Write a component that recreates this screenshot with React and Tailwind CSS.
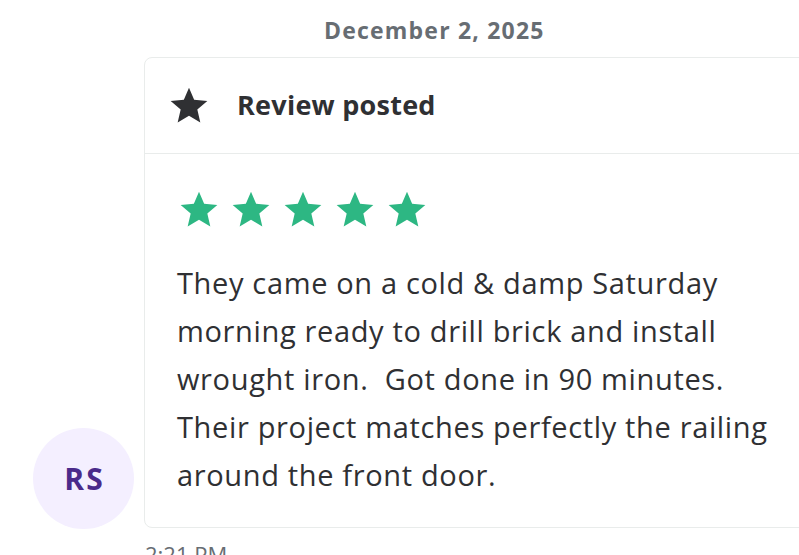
import React from "react";

const StarPath =
  "M12 17.27L18.18 21l-1.64-7.03L22 9.24l-7.19-.61L12 2 9.19 8.63 2 9.24l5.46 4.73L5.82 21z";

function Star({ className }) {
  return (
    <svg viewBox="0 0 24 24" className={className} fill="currentColor">
      <path d={StarPath} />
    </svg>
  );
}

const lines = [
  "They came on a cold & damp Saturday",
  "morning ready to drill brick and install",
  "wrought iron.\u00a0 Got done in 90 minutes.",
  "Their project matches perfectly the railing",
  "around the front door.",
];

export default function App() {
  const font = { fontFamily: "'Open Sans', Lato, sans-serif" };
  return (
    <div className="w-[799px] h-[555px] overflow-hidden bg-white relative" style={font}>
      <div className="h-[57px] pl-[324px] pt-[15px]">
        <div className="text-[23px] leading-[30px] font-bold tracking-[1.2px] text-[#676d73] whitespace-nowrap">
          December 2, 2025
        </div>
      </div>
      <div className="flex items-end">
        <div className="ml-[33px] w-[101px] h-[101px] rounded-full bg-[#f4efff] flex items-center justify-center shrink-0 mb-[-1px]">
          <span className="pl-[2px] text-[30px] leading-[30px] font-bold tracking-[2px] text-[#4a2a8a]">RS</span>
        </div>
        <div className="ml-[10px] w-[700px] shrink-0 border border-[#e9eceb] rounded-[8px] bg-white">
          <div className="h-[96px] border-b border-[#e9eceb] flex items-center pl-[22px]">
            <Star className="w-[44px] h-[44px] text-[#2f3033]" />
            <span className="ml-[26px] text-[27px] font-bold tracking-[0.25px] text-[#2f3033]">Review posted</span>
          </div>
          <div className="pl-[32px] pt-[34px] pb-[28px]">
            <div className="flex gap-[8px] text-[#2db783]">
              <Star className="w-[44px] h-[44px]" />
              <Star className="w-[44px] h-[44px]" />
              <Star className="w-[44px] h-[44px]" />
              <Star className="w-[44px] h-[44px]" />
              <Star className="w-[44px] h-[44px]" />
            </div>
            <div className="mt-[27px] text-[29px] leading-[48px] tracking-[0.65px] text-[#2f3033]">
              {lines.map((l) => (
                <div key={l} className="whitespace-nowrap">{l}</div>
              ))}
            </div>
          </div>
        </div>
      </div>
      <div className="pl-[145px] pt-[11px] text-[22px] leading-[30px] text-[#676d73]">2:21 PM</div>
    </div>
  );
}
